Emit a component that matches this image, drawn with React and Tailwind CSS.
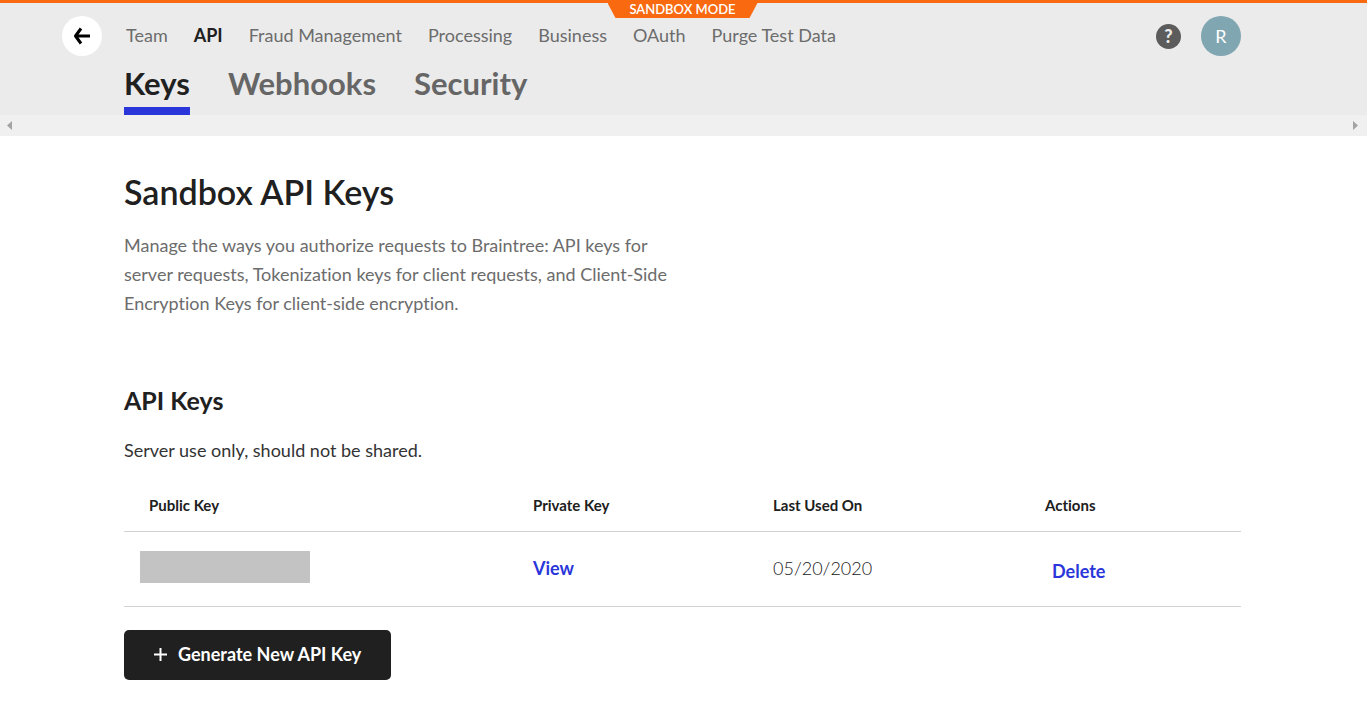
import React from "react";

const navLinks = [
  "Team",
  "API",
  "Fraud Management",
  "Processing",
  "Business",
  "OAuth",
  "Purge Test Data",
];

const tabs = ["Keys", "Webhooks", "Security"];

const apiKeys = [{ id: 1, lastUsed: "05/20/2020" }];

const SandboxBanner = () => (
  <div className="absolute inset-x-0 top-0 flex h-[18px] justify-center border-t-3 border-[#f96a10] pr-[2px]">
    <span className="flex h-[15px] w-[150px] items-center justify-center bg-[#f96a10] pb-[3px] text-[13px] font-semibold leading-none text-white [clip-path:polygon(0_0,100%_0,142px_100%,8px_100%)]">
      SANDBOX MODE
    </span>
  </div>
);

const Header = () => (
  <header className="relative bg-[#ebebeb] pt-4">
    <SandboxBanner />

    <div className="flex items-center pl-[62px] pr-[126px]">
      <button
        type="button"
        aria-label="Back"
        className="flex size-10 items-center justify-center rounded-full bg-white"
      >
        <svg width="18" height="18" viewBox="0 0 18 18" fill="none" stroke="#000" strokeWidth="3">
          <path d="M8 1.500 2.500 9l5.500 7.500M2.500 9H17" strokeLinejoin="round" />
        </svg>
      </button>

      <nav className="ml-6 flex flex-1 items-center gap-[26px] pb-[2px] text-[18px]">
        {navLinks.map((link) => (
          <a
            key={link}
            href="#"
            className={
              link === "API" ? "font-bold text-[#202020]" : "font-normal text-[#6c6c6c]"
            }
          >
            {link}
          </a>
        ))}
      </nav>

      <button
        type="button"
        aria-label="Help"
        className="flex size-[25px] items-center justify-center rounded-full bg-[#5c5c5c] text-[18px] font-black leading-none text-[#ebebeb]"
      >
        ?
      </button>
      <button
        type="button"
        className="ml-5 flex size-10 items-center justify-center rounded-full bg-[#80a6b1] text-[18px] text-white"
      >
        R
      </button>
    </div>

    <nav className="flex gap-[38px] px-[124px] pt-[6px] text-[31px] font-bold leading-[43px]">
      {tabs.map((tab) => (
        <a
          key={tab}
          href="#"
          className={
            tab === "Keys"
              ? "border-b-8 border-[#2a36d9] pb-[2px] text-[#202020]"
              : "border-b-8 border-transparent pb-[2px] text-[#666]"
          }
        >
          {tab}
        </a>
      ))}
    </nav>
  </header>
);

const ScrollStrip = () => (
  <div className="flex h-[21px] items-center justify-between bg-[#f0f0f0] pl-[7px] pr-[9px]">
    <svg width="5" height="9" viewBox="0 0 5 9" fill="#a3a3a3">
      <path d="M5 0v9L0 4.500z" />
    </svg>
    <svg width="5" height="9" viewBox="0 0 5 9" fill="#a3a3a3">
      <path d="M0 0v9l5-4.500z" />
    </svg>
  </div>
);

const KeysTable = () => (
  <table className="mt-[14px] w-full table-fixed text-left text-[#202020]">
    <thead>
      <tr className="h-[52px] border-b border-[#d2d2d2] text-[15px]">
        <th className="w-96 px-[25px] font-bold">Public Key</th>
        <th className="w-60 px-[25px] font-bold">Private Key</th>
        <th className="w-68 px-[25px] font-bold">Last Used On</th>
        <th className="px-[25px] font-bold">Actions</th>
      </tr>
    </thead>
    <tbody>
      {apiKeys.map((key) => (
        <tr key={key.id} className="h-[75px] border-b border-[#d2d2d2] text-[18px]">
          <td className="px-4 pb-1">
            <div className="h-8 w-[170px] bg-[#c3c3c3]" />
          </td>
          <td className="px-[25px]">
            <button type="button" className="font-bold text-[#2a36d9]">
              View
            </button>
          </td>
          <td className="px-[25px] font-light">{key.lastUsed}</td>
          <td className="px-8 pt-[6px]">
            <button type="button" className="font-bold text-[#2a36d9]">
              Delete
            </button>
          </td>
        </tr>
      ))}
    </tbody>
  </table>
);

const App = () => {
  return (
    <div className="min-h-screen bg-white font-['Lato',sans-serif] [font-variant-ligatures:none]">
      <Header />
      <ScrollStrip />

      <main className="pl-[124px] pr-[126px] pt-9 pb-12">
        <h1 className="text-[34px] font-semibold leading-10 text-[#202020]">
          Sandbox API Keys
        </h1>
        <p className="mt-[19px] max-w-[560px] text-[18px] leading-[29px] text-[#6c6c6c]">
          Manage the ways you authorize requests to Braintree: API keys for
          server requests, Tokenization keys for client requests, and Client-Side
          Encryption Keys for client-side encryption.
        </p>

        <section className="mt-16">
          <h2 className="text-[25px] font-bold leading-9 text-[#202020]">API Keys</h2>
          <p className="mt-[18px] text-[18px] leading-[29px] text-[#333]">
            Server use only, should not be shared.
          </p>

          <KeysTable />

          <button
            type="button"
            className="mt-[23px] flex h-[50px] items-center gap-[11px] rounded-[5px] bg-[#202020] px-[30px] text-[18px] font-bold text-white"
          >
            <svg width="13" height="13" viewBox="0 0 13 13" stroke="#fff" strokeWidth="2">
              <path d="M6.500 0v13M0 6.500h13" />
            </svg>
            Generate New API Key
          </button>
        </section>
      </main>
    </div>
  );
};

export default App;
